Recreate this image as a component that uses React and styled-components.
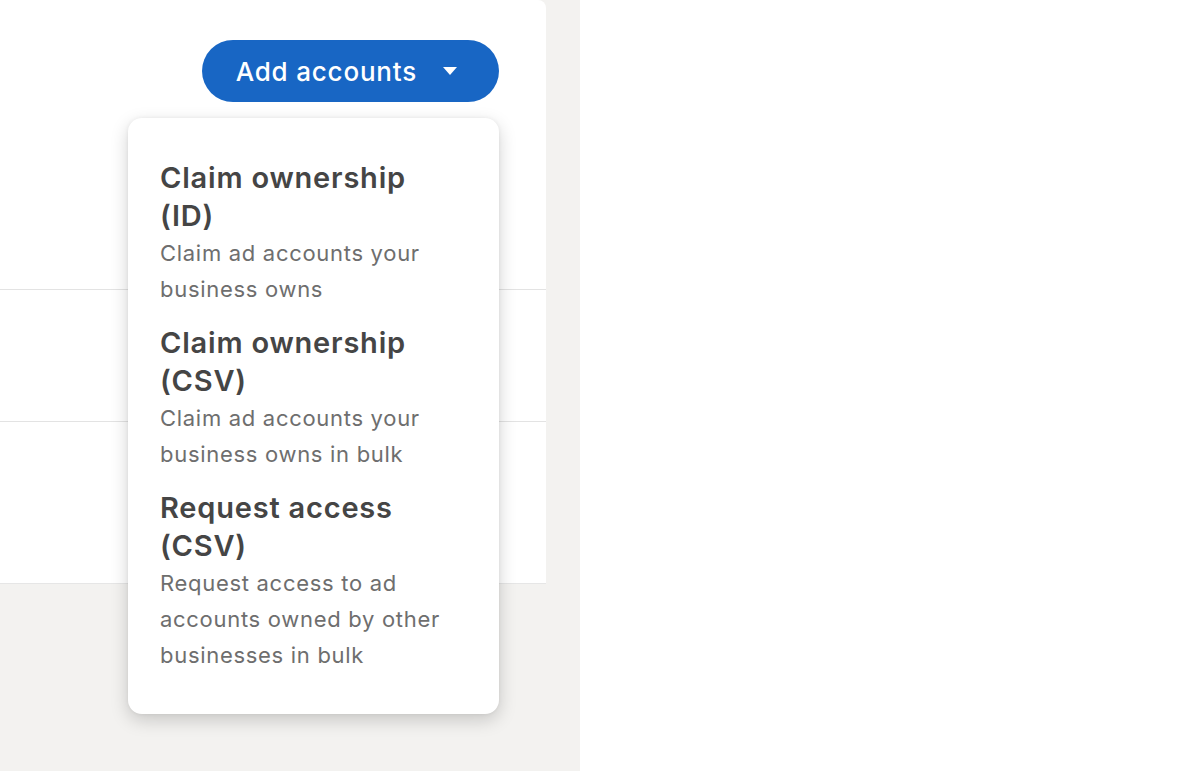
import React from 'react';
import styled, { createGlobalStyle } from 'styled-components';

const GlobalStyle = createGlobalStyle`
  html, body {
    margin: 0;
    padding: 0;
    background: #ffffff;
    font-family: Inter, "Noto Sans", "Liberation Sans", sans-serif;
    -webkit-font-smoothing: antialiased;
  }
`

const menuItems = [
    {
        id: 1,
        title: 'Claim ownership (ID)',
        text: 'Claim ad accounts your business owns'
    },
    {
        id: 2,
        title: 'Claim ownership (CSV)',
        text: 'Claim ad accounts your business owns in bulk'
    },
    {
        id: 3,
        title: 'Request access (CSV)',
        text: 'Request access to ad accounts owned by other businesses in bulk'
    }
]

const Page = styled.div`
display: flex;
width: 1200px;
height: 771px;
overflow: hidden;
`
const LeftPane = styled.div`
width: 580px;
height: 100%;
background: #f3f2f0;
`
const RightPane = styled.div`
flex: 1;
background: #ffffff;
`
const Card = styled.div`
width: 546px;
background: #ffffff;
border-top-right-radius: 8px;
border-bottom: 1px solid #e6e6e6;
`
const Row = styled.div`
height: ${props => props.h}px;
border-top: ${props => props.first ? 'none' : '1px solid #e3e3e3'};
box-sizing: border-box;
`
const HeaderRow = styled(Row)`
display: flex;
justify-content: flex-end;
align-items: flex-start;
padding: 40px 47px 0 0;
`
const ButtonWrap = styled.div`
position: relative;
`
const AddButton = styled.button`
display: flex;
align-items: center;
height: 62px;
padding: 0 42px 0 34px;
border: none;
border-radius: 31px;
background: #1866c4;
color: #ffffff;
font-family: inherit;
font-size: 26px;
font-weight: 500;
letter-spacing: 0.8px;
cursor: pointer;
`
const Caret = styled.span`
width: 0;
height: 0;
margin-left: 26px;
border-left: 7px solid transparent;
border-right: 7px solid transparent;
border-top: 8px solid #ffffff;
`
const Menu = styled.div`
position: absolute;
top: 78px;
right: 0;
width: 371px;
padding: 32px 0 33px;
box-sizing: border-box;
background: #ffffff;
border-radius: 14px;
box-shadow: 0 6px 18px rgba(0, 0, 0, 0.18), 0 0 4px rgba(0, 0, 0, 0.06);
`
const MenuItem = styled.div`
padding: 9px 44px 8px 32px;
cursor: pointer;
`
const ItemTitle = styled.div`
font-size: 29px;
font-weight: 600;
line-height: 38px;
letter-spacing: 0.8px;
color: #454545;
`
const ItemText = styled.div`
font-size: 22px;
font-weight: 400;
line-height: 36px;
letter-spacing: 0.7px;
color: #6e6e6e;
`

export default function App() {
    return (
        <Page>
            <GlobalStyle />
            <LeftPane>
                <Card>
                    <HeaderRow h={289} first>
                        <ButtonWrap>
                            <AddButton>
                                Add accounts
                                <Caret />
                            </AddButton>
                            <Menu>
                                {menuItems.map(({ id, title, text }) => (
                                    <MenuItem key={id}>
                                        <ItemTitle>{title}</ItemTitle>
                                        <ItemText>{text}</ItemText>
                                    </MenuItem>
                                ))}
                            </Menu>
                        </ButtonWrap>
                    </HeaderRow>
                    <Row h={132} />
                    <Row h={162} />
                </Card>
            </LeftPane>
            <RightPane />
        </Page>
    );
}
